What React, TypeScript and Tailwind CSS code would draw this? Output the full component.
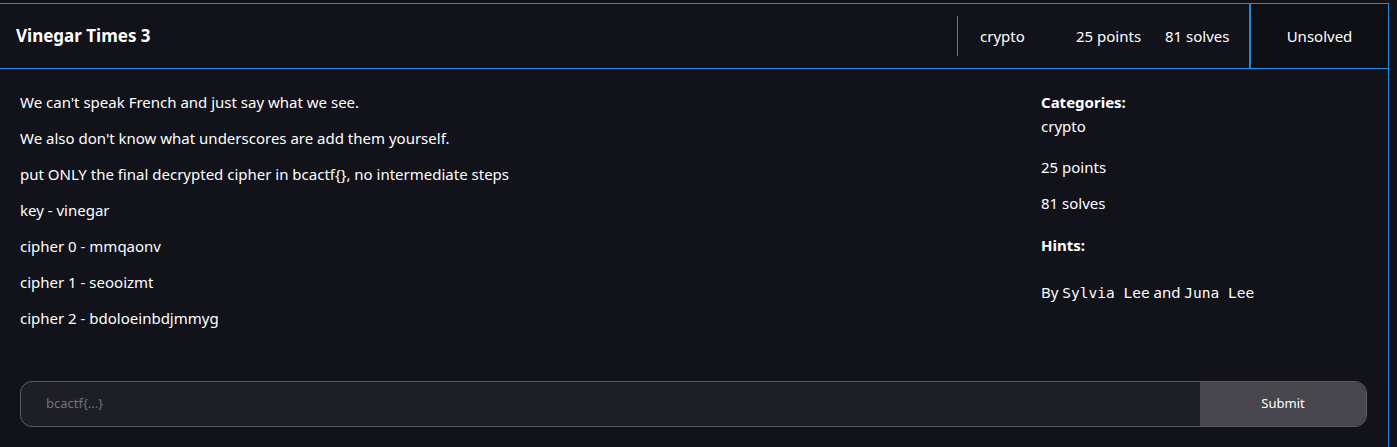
import React from "react";

export default function App() {
  const lines = [
    "We can't speak French and just say what we see.",
    "We also don't know what underscores are add them yourself.",
    "put ONLY the final decrypted cipher in bcactf{}, no intermediate steps",
    "key - vinegar",
    "cipher 0 - mmqaonv",
    "cipher 1 - seooizmt",
    "cipher 2 - bdoloeinbdjmmyg",
  ];

  return (
    <div
      className="w-[1397px] h-[447px] overflow-hidden bg-[#12121a] pt-[3px] text-white"
      style={{ fontFamily: '"Noto Sans", "Open Sans", sans-serif' }}
    >
      <div className="w-[1389px] h-[460px] border-t border-r border-[#1a8be0] bg-[#11121a]">
        {/* header */}
        <div className="flex items-stretch h-[65px] border-b border-[#1a8be0]">
          <div className="flex-1 flex items-center pl-4">
            <h1 className="text-[17px] font-bold">Vinegar Times 3</h1>
          </div>
          <div className="flex items-center">
            <div className="w-px h-10 bg-[#1a8be0]" />
            <span className="ml-[22px] w-[96px] text-[15px]">crypto</span>
            <span className="w-[89px] text-[15px]">25 points</span>
            <span className="w-[84px] text-[15px]">81 solves</span>
          </div>
          <div className="w-[139px] border-l-2 border-[#1a8be0] bg-[#0e0f14] flex items-center justify-center text-[15px]">
            Unsolved
          </div>
        </div>

        {/* body */}
        <div className="flex pl-5 pt-[21px]">
          <div className="flex-1 flex flex-col gap-[12px]">
            {lines.map((l) => (
              <p key={l} className="text-[15px] leading-[24px]">
                {l}
              </p>
            ))}
          </div>
          <div className="w-[347px] flex flex-col text-[15px] leading-[24px]">
            <p className="font-bold">Categories:</p>
            <p>crypto</p>
            <p className="mt-[17px]">25 points</p>
            <p className="mt-[12px]">81 solves</p>
            <p className="mt-[18px] font-bold">Hints:</p>
            <p className="mt-[23px]">
              By{" "}
              <code className="text-[14.5px]" style={{ fontFamily: '"DejaVu Sans Mono", monospace' }}>
                Sylvia Lee
              </code>{" "}
              and{" "}
              <code className="text-[14.5px]" style={{ fontFamily: '"DejaVu Sans Mono", monospace' }}>
                Juna Lee
              </code>
            </p>
          </div>
        </div>

        {/* submit */}
        <form className="mt-[51px] ml-5 mr-[21px] flex h-[46px] rounded-xl border border-[#5c5d64] overflow-hidden bg-[#1e1f26]">
          <input
            className="flex-1 bg-transparent pl-[25px] text-[13px] outline-none placeholder:text-[#6b7385]"
            placeholder="bcactf{...}"
          />
          <button type="button" className="w-[166px] bg-[#47464d] text-[13px] text-white">
            Submit
          </button>
        </form>
      </div>
    </div>
  );
}
